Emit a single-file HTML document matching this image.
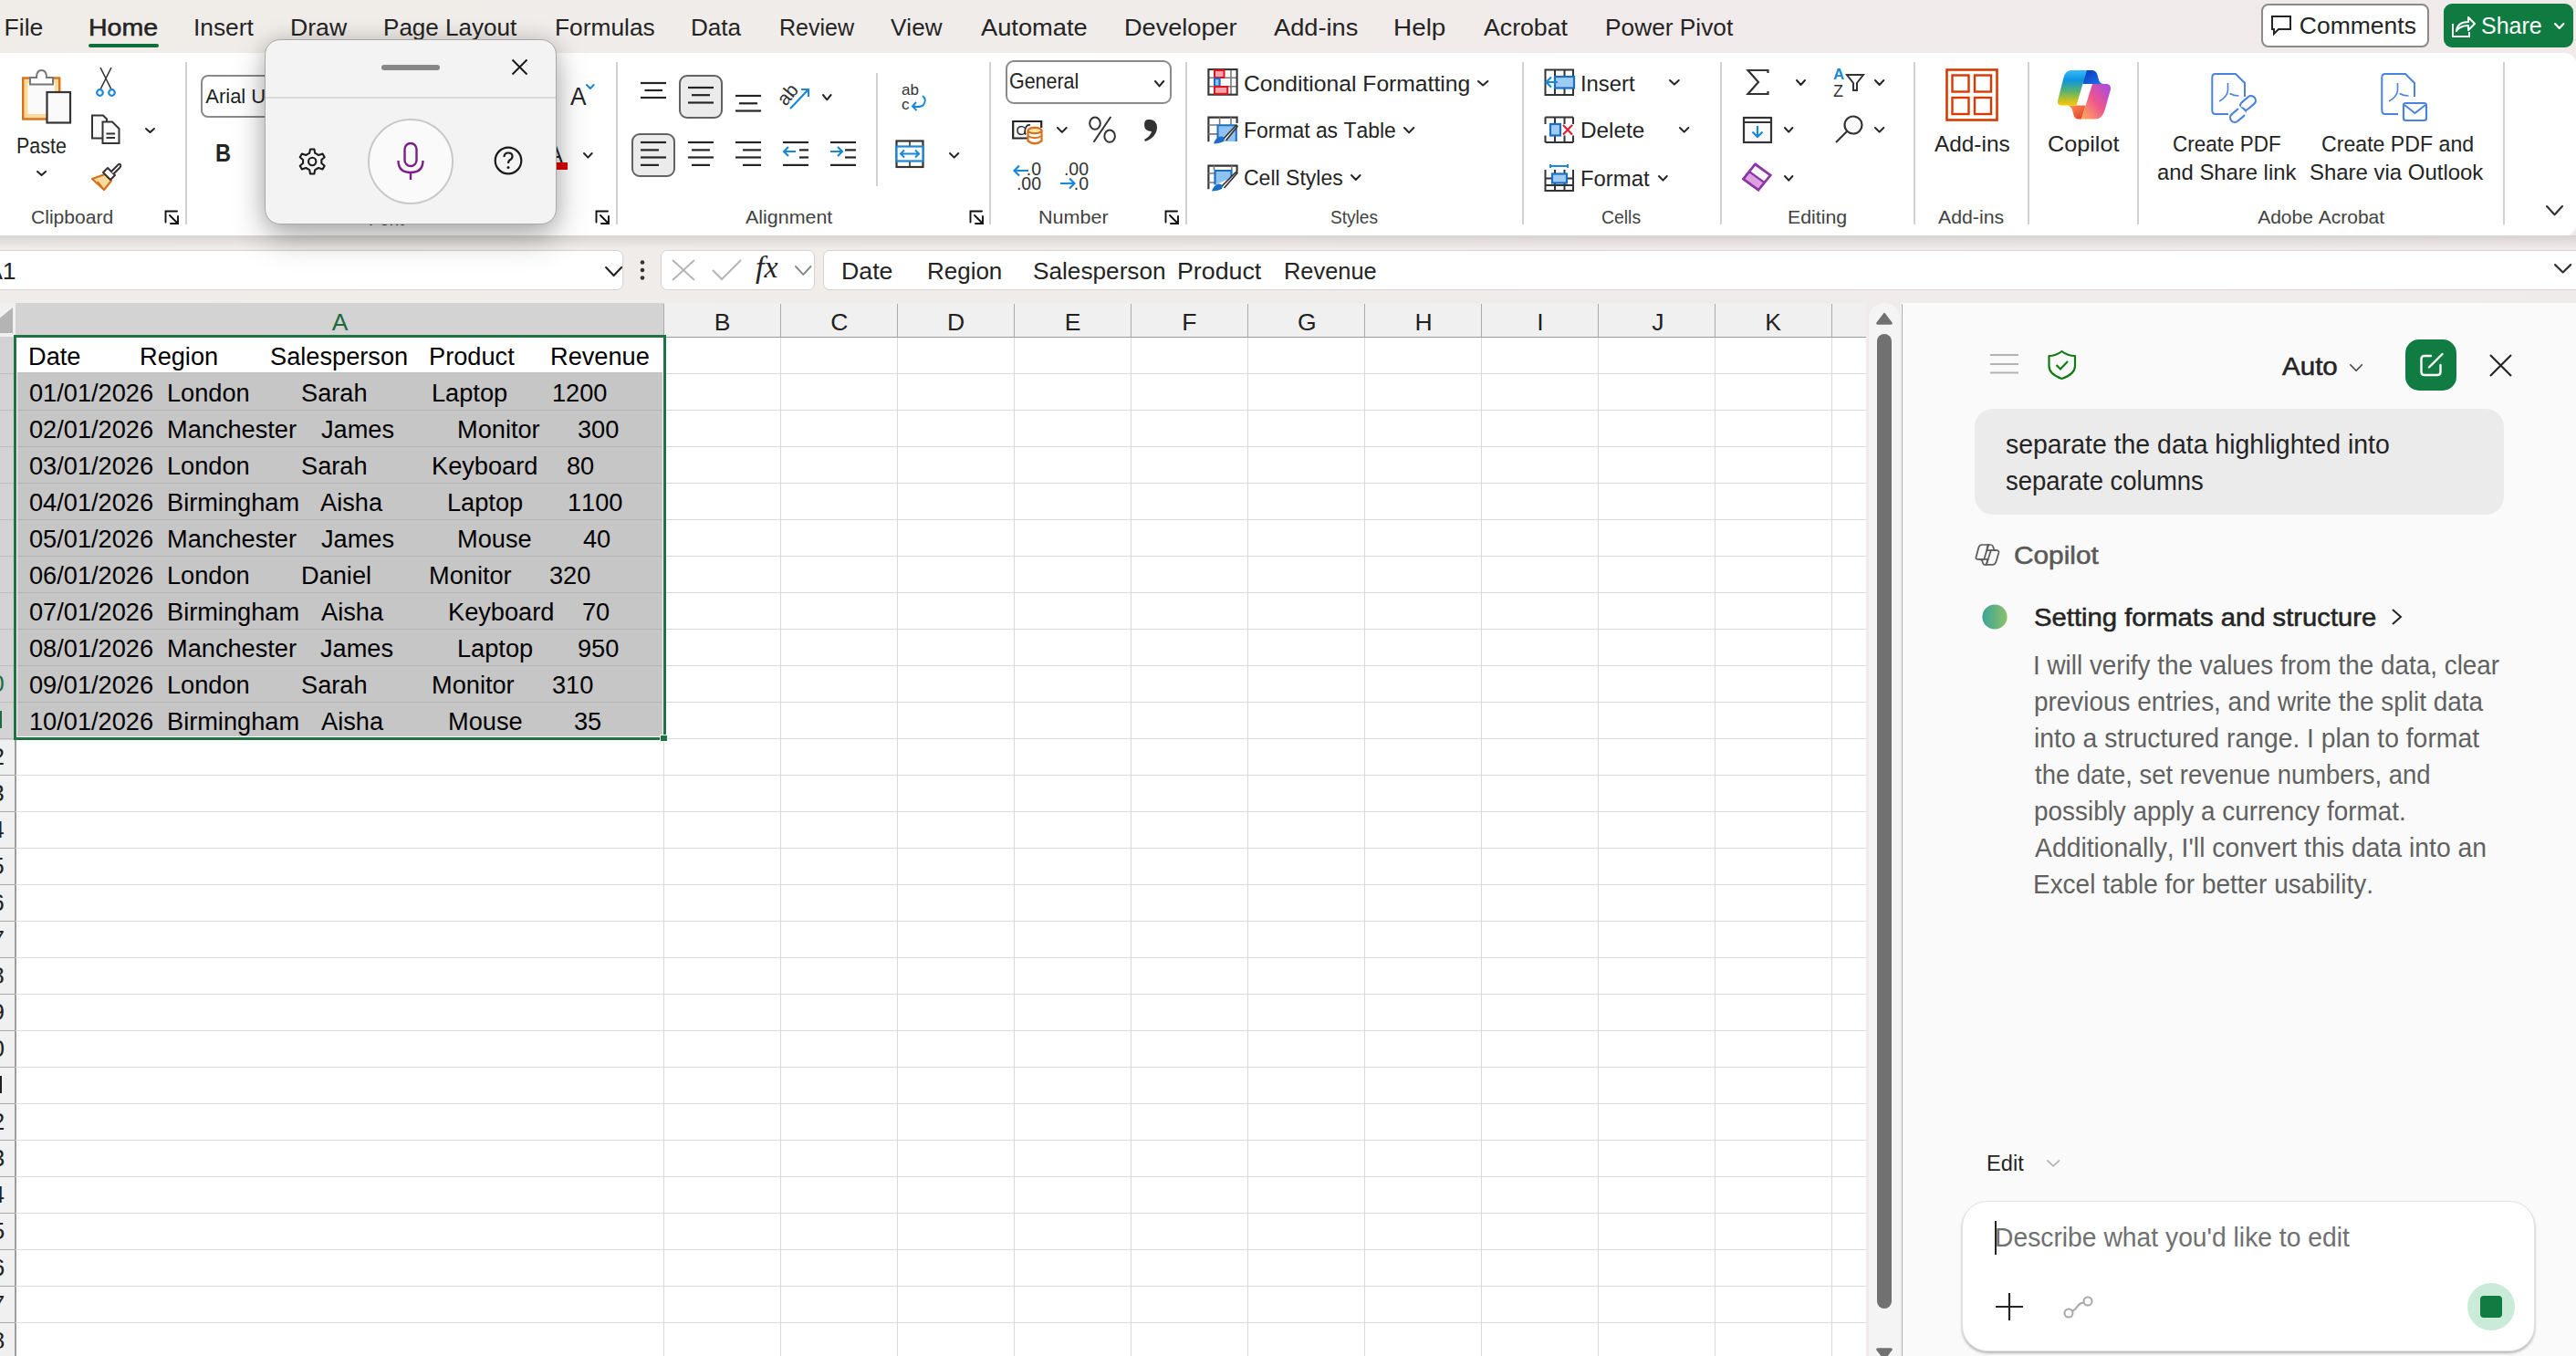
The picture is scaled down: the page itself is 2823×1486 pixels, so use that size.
<!DOCTYPE html>
<html><head><meta charset="utf-8"><style>
html,body{margin:0;padding:0;}
body{width:2823px;height:1486px;overflow:hidden;position:relative;background:#EFEBE8;font-family:"Liberation Sans",sans-serif;font-kerning:none;}
.t{position:absolute;white-space:pre;transform-origin:0 0;font-kerning:none;}
.b{position:absolute;box-sizing:border-box;}
.i{position:absolute;overflow:visible;}
</style></head><body>
<div class="b" style="left:0px;top:0px;width:2823px;height:332px;background:linear-gradient(90deg,#F0EDE9 0%,#F0ECEA 45%,#F1EAEB 100%);"></div>
<div class="b" style="left:-20px;top:58px;width:2843px;height:200px;background:#FFFFFF;border-radius:0 12px 12px 0;"></div>
<div class="b" style="left:0px;top:258px;width:2823px;height:14px;background:linear-gradient(180deg,rgba(0,0,0,0.10),rgba(0,0,0,0));"></div>
<div class="b" style="left:-40px;top:332px;width:2085px;height:1154px;background:#FFFFFF;"></div>
<div class="b" style="left:17px;top:332px;width:2028px;height:37px;background:#F0F0F0;"></div>
<div class="b" style="left:17px;top:332px;width:711px;height:37px;background:#D3D3D3;"></div>
<div class="b" style="left:-40px;top:369px;width:57px;height:1117px;background:#F0F0F0;"></div>
<div class="b" style="left:-40px;top:369px;width:57px;height:442px;background:#D3D3D3;"></div>
<div class="b" style="left:0px;top:332px;width:17px;height:37px;background:#F0F0F0;"></div>
<div class="b" style="left:15px;top:369px;width:2030px;height:1px;background:#9A9A9A;"></div>
<div class="b" style="left:16px;top:369px;width:2px;height:1117px;background:#9D9D9D;"></div>
<div class="b" style="left:727px;top:333px;width:1px;height:36px;background:#ABABAB;"></div>
<div class="b" style="left:855px;top:333px;width:1px;height:36px;background:#ABABAB;"></div>
<div class="b" style="left:983px;top:333px;width:1px;height:36px;background:#ABABAB;"></div>
<div class="b" style="left:1111px;top:333px;width:1px;height:36px;background:#ABABAB;"></div>
<div class="b" style="left:1239px;top:333px;width:1px;height:36px;background:#ABABAB;"></div>
<div class="b" style="left:1367px;top:333px;width:1px;height:36px;background:#ABABAB;"></div>
<div class="b" style="left:1495px;top:333px;width:1px;height:36px;background:#ABABAB;"></div>
<div class="b" style="left:1623px;top:333px;width:1px;height:36px;background:#ABABAB;"></div>
<div class="b" style="left:1751px;top:333px;width:1px;height:36px;background:#ABABAB;"></div>
<div class="b" style="left:1879px;top:333px;width:1px;height:36px;background:#ABABAB;"></div>
<div class="b" style="left:2007px;top:333px;width:1px;height:36px;background:#ABABAB;"></div>
<div class="b" style="left:727px;top:370px;width:1px;height:1117px;background:#D9D9D9;"></div>
<div class="b" style="left:855px;top:370px;width:1px;height:1117px;background:#D9D9D9;"></div>
<div class="b" style="left:983px;top:370px;width:1px;height:1117px;background:#D9D9D9;"></div>
<div class="b" style="left:1111px;top:370px;width:1px;height:1117px;background:#D9D9D9;"></div>
<div class="b" style="left:1239px;top:370px;width:1px;height:1117px;background:#D9D9D9;"></div>
<div class="b" style="left:1367px;top:370px;width:1px;height:1117px;background:#D9D9D9;"></div>
<div class="b" style="left:1495px;top:370px;width:1px;height:1117px;background:#D9D9D9;"></div>
<div class="b" style="left:1623px;top:370px;width:1px;height:1117px;background:#D9D9D9;"></div>
<div class="b" style="left:1751px;top:370px;width:1px;height:1117px;background:#D9D9D9;"></div>
<div class="b" style="left:1879px;top:370px;width:1px;height:1117px;background:#D9D9D9;"></div>
<div class="b" style="left:2007px;top:370px;width:1px;height:1117px;background:#D9D9D9;"></div>
<div class="b" style="left:17px;top:409px;width:2028px;height:1px;background:#DADADA;"></div>
<div class="b" style="left:-40px;top:409px;width:57px;height:1px;background:#BDBDBD;"></div>
<div class="b" style="left:17px;top:449px;width:2028px;height:1px;background:#DADADA;"></div>
<div class="b" style="left:-40px;top:449px;width:57px;height:1px;background:#BDBDBD;"></div>
<div class="b" style="left:17px;top:489px;width:2028px;height:1px;background:#DADADA;"></div>
<div class="b" style="left:-40px;top:489px;width:57px;height:1px;background:#BDBDBD;"></div>
<div class="b" style="left:17px;top:529px;width:2028px;height:1px;background:#DADADA;"></div>
<div class="b" style="left:-40px;top:529px;width:57px;height:1px;background:#BDBDBD;"></div>
<div class="b" style="left:17px;top:569px;width:2028px;height:1px;background:#DADADA;"></div>
<div class="b" style="left:-40px;top:569px;width:57px;height:1px;background:#BDBDBD;"></div>
<div class="b" style="left:17px;top:609px;width:2028px;height:1px;background:#DADADA;"></div>
<div class="b" style="left:-40px;top:609px;width:57px;height:1px;background:#BDBDBD;"></div>
<div class="b" style="left:17px;top:649px;width:2028px;height:1px;background:#DADADA;"></div>
<div class="b" style="left:-40px;top:649px;width:57px;height:1px;background:#BDBDBD;"></div>
<div class="b" style="left:17px;top:689px;width:2028px;height:1px;background:#DADADA;"></div>
<div class="b" style="left:-40px;top:689px;width:57px;height:1px;background:#BDBDBD;"></div>
<div class="b" style="left:17px;top:729px;width:2028px;height:1px;background:#DADADA;"></div>
<div class="b" style="left:-40px;top:729px;width:57px;height:1px;background:#BDBDBD;"></div>
<div class="b" style="left:17px;top:769px;width:2028px;height:1px;background:#DADADA;"></div>
<div class="b" style="left:-40px;top:769px;width:57px;height:1px;background:#BDBDBD;"></div>
<div class="b" style="left:17px;top:809px;width:2028px;height:1px;background:#DADADA;"></div>
<div class="b" style="left:-40px;top:809px;width:57px;height:1px;background:#BDBDBD;"></div>
<div class="b" style="left:17px;top:849px;width:2028px;height:1px;background:#DADADA;"></div>
<div class="b" style="left:-40px;top:849px;width:57px;height:1px;background:#A8A8A8;"></div>
<div class="b" style="left:17px;top:889px;width:2028px;height:1px;background:#DADADA;"></div>
<div class="b" style="left:-40px;top:889px;width:57px;height:1px;background:#A8A8A8;"></div>
<div class="b" style="left:17px;top:929px;width:2028px;height:1px;background:#DADADA;"></div>
<div class="b" style="left:-40px;top:929px;width:57px;height:1px;background:#A8A8A8;"></div>
<div class="b" style="left:17px;top:969px;width:2028px;height:1px;background:#DADADA;"></div>
<div class="b" style="left:-40px;top:969px;width:57px;height:1px;background:#A8A8A8;"></div>
<div class="b" style="left:17px;top:1009px;width:2028px;height:1px;background:#DADADA;"></div>
<div class="b" style="left:-40px;top:1009px;width:57px;height:1px;background:#A8A8A8;"></div>
<div class="b" style="left:17px;top:1049px;width:2028px;height:1px;background:#DADADA;"></div>
<div class="b" style="left:-40px;top:1049px;width:57px;height:1px;background:#A8A8A8;"></div>
<div class="b" style="left:17px;top:1089px;width:2028px;height:1px;background:#DADADA;"></div>
<div class="b" style="left:-40px;top:1089px;width:57px;height:1px;background:#A8A8A8;"></div>
<div class="b" style="left:17px;top:1129px;width:2028px;height:1px;background:#DADADA;"></div>
<div class="b" style="left:-40px;top:1129px;width:57px;height:1px;background:#A8A8A8;"></div>
<div class="b" style="left:17px;top:1169px;width:2028px;height:1px;background:#DADADA;"></div>
<div class="b" style="left:-40px;top:1169px;width:57px;height:1px;background:#A8A8A8;"></div>
<div class="b" style="left:17px;top:1209px;width:2028px;height:1px;background:#DADADA;"></div>
<div class="b" style="left:-40px;top:1209px;width:57px;height:1px;background:#A8A8A8;"></div>
<div class="b" style="left:17px;top:1249px;width:2028px;height:1px;background:#DADADA;"></div>
<div class="b" style="left:-40px;top:1249px;width:57px;height:1px;background:#A8A8A8;"></div>
<div class="b" style="left:17px;top:1289px;width:2028px;height:1px;background:#DADADA;"></div>
<div class="b" style="left:-40px;top:1289px;width:57px;height:1px;background:#A8A8A8;"></div>
<div class="b" style="left:17px;top:1329px;width:2028px;height:1px;background:#DADADA;"></div>
<div class="b" style="left:-40px;top:1329px;width:57px;height:1px;background:#A8A8A8;"></div>
<div class="b" style="left:17px;top:1369px;width:2028px;height:1px;background:#DADADA;"></div>
<div class="b" style="left:-40px;top:1369px;width:57px;height:1px;background:#A8A8A8;"></div>
<div class="b" style="left:17px;top:1409px;width:2028px;height:1px;background:#DADADA;"></div>
<div class="b" style="left:-40px;top:1409px;width:57px;height:1px;background:#A8A8A8;"></div>
<div class="b" style="left:17px;top:1449px;width:2028px;height:1px;background:#DADADA;"></div>
<div class="b" style="left:-40px;top:1449px;width:57px;height:1px;background:#A8A8A8;"></div>
<div class="b" style="left:17px;top:1489px;width:2028px;height:1px;background:#DADADA;"></div>
<div class="b" style="left:-40px;top:1489px;width:57px;height:1px;background:#A8A8A8;"></div>
<div class="b" style="left:19px;top:409px;width:707px;height:400px;background:#C6C6C6;"></div>
<div class="b" style="left:19px;top:449px;width:707px;height:1px;background:#B3B3B3;"></div>
<div class="b" style="left:19px;top:489px;width:707px;height:1px;background:#B3B3B3;"></div>
<div class="b" style="left:19px;top:529px;width:707px;height:1px;background:#B3B3B3;"></div>
<div class="b" style="left:19px;top:569px;width:707px;height:1px;background:#B3B3B3;"></div>
<div class="b" style="left:19px;top:609px;width:707px;height:1px;background:#B3B3B3;"></div>
<div class="b" style="left:19px;top:649px;width:707px;height:1px;background:#B3B3B3;"></div>
<div class="b" style="left:19px;top:689px;width:707px;height:1px;background:#B3B3B3;"></div>
<div class="b" style="left:19px;top:729px;width:707px;height:1px;background:#B3B3B3;"></div>
<div class="b" style="left:19px;top:769px;width:707px;height:1px;background:#B3B3B3;"></div>
<div class="b" style="left:19px;top:370px;width:707px;height:38px;background:#FFFFFF;"></div>
<div class="b" style="left:19px;top:408px;width:707px;height:1px;background:#C0C0C0;"></div>
<div class="b" style="left:15px;top:367px;width:715px;height:444px;border:3px solid #1F7244;"></div>
<div class="b" style="left:18px;top:370px;width:709px;height:438px;border:1px solid #FFFFFF;border-top:none;border-left:1px solid #FFFFFF;"></div>
<div class="b" style="left:723px;top:805px;width:9px;height:8px;background:#1F7244;border:1px solid #fff;"></div>
<div class="b" style="left:2045px;top:332px;width:39px;height:1154px;background:#F1EAEB;"></div>
<div class="b" style="left:2048px;top:332px;width:34px;height:1170px;background:#F4F4F4;border-radius:17px;"></div>
<div class="b" style="left:2057px;top:366px;width:16px;height:1068px;background:#717171;border-radius:8px;"></div>
<svg class="i" style="left:2056px;top:342px;" width="18" height="14" viewBox="0 0 18 14"><path d="M9 1.5 L17 12 Q17.5 13 16 13 L2 13 Q0.5 13 1 12 Z" fill="#717171" stroke="#717171" stroke-width="1.5" stroke-linejoin="round"/></svg>
<svg class="i" style="left:2056px;top:1477px;" width="18" height="14" viewBox="0 0 18 14"><path d="M9 12.5 L17 2 Q17.5 1 16 1 L2 1 Q0.5 1 1 2 Z" fill="#717171" stroke="#717171" stroke-width="1.5" stroke-linejoin="round"/></svg>
<div class="b" style="left:2083px;top:332px;width:740px;height:1154px;background:#FAFAFA;"></div>
<div class="b" style="left:2084px;top:333px;width:1px;height:1153px;background:#A9A9A9;"></div>
<span class="t" style="left:4.62px;top:16.56px;font-size:26.5px;line-height:26.5px;color:#242424;font-weight:400;">File</span>
<span class="t" style="left:96.86px;top:16.56px;font-size:26.5px;line-height:26.5px;color:#242424;font-weight:400;transform:scaleX(1.0767);-webkit-text-stroke:0.55px #242424;">Home</span>
<span class="t" style="left:211.57px;top:16.56px;font-size:26.5px;line-height:26.5px;color:#242424;font-weight:400;transform:scaleX(0.9931);">Insert</span>
<span class="t" style="left:317.82px;top:16.56px;font-size:26.5px;line-height:26.5px;color:#242424;font-weight:400;transform:scaleX(1.0045);">Draw</span>
<span class="t" style="left:420.46px;top:16.56px;font-size:26.5px;line-height:26.5px;color:#242424;font-weight:400;transform:scaleX(0.9833);">Page Layout</span>
<span class="t" style="left:607.94px;top:16.56px;font-size:26.5px;line-height:26.5px;color:#242424;font-weight:400;transform:scaleX(0.9934);">Formulas</span>
<span class="t" style="left:757.16px;top:16.56px;font-size:26.5px;line-height:26.5px;color:#242424;font-weight:400;transform:scaleX(0.9851);">Data</span>
<span class="t" style="left:853.55px;top:16.56px;font-size:26.5px;line-height:26.5px;color:#242424;font-weight:400;transform:scaleX(0.9448);">Review</span>
<span class="t" style="left:976.49px;top:16.56px;font-size:26.5px;line-height:26.5px;color:#242424;font-weight:400;transform:scaleX(0.9828);">View</span>
<span class="t" style="left:1074.55px;top:16.56px;font-size:26.5px;line-height:26.5px;color:#242424;font-weight:400;transform:scaleX(1.0294);">Automate</span>
<span class="t" style="left:1231.78px;top:16.56px;font-size:26.5px;line-height:26.5px;color:#242424;font-weight:400;transform:scaleX(1.0231);">Developer</span>
<span class="t" style="left:1396.15px;top:16.56px;font-size:26.5px;line-height:26.5px;color:#242424;font-weight:400;transform:scaleX(1.0277);">Add-ins</span>
<span class="t" style="left:1527.01px;top:16.56px;font-size:26.5px;line-height:26.5px;color:#242424;font-weight:400;transform:scaleX(1.0524);">Help</span>
<span class="t" style="left:1625.95px;top:16.56px;font-size:26.5px;line-height:26.5px;color:#242424;font-weight:400;transform:scaleX(1.0068);">Acrobat</span>
<span class="t" style="left:1758.94px;top:16.56px;font-size:26.5px;line-height:26.5px;color:#242424;font-weight:400;transform:scaleX(0.9919);">Power Pivot</span>
<div class="b" style="left:97px;top:48px;width:77px;height:4px;background:#0F6F3A;border-radius:2px;"></div>
<span class="t" style="left:31.37px;top:376.12px;font-size:28.2px;line-height:28.2px;color:#000000;font-weight:400;transform:scaleX(0.9645);">Date</span>
<span class="t" style="left:153.37px;top:376.12px;font-size:28.2px;line-height:28.2px;color:#000000;font-weight:400;transform:scaleX(0.9645);">Region</span>
<span class="t" style="left:296.36px;top:376.12px;font-size:28.2px;line-height:28.2px;color:#000000;font-weight:400;transform:scaleX(0.9645);">Salesperson</span>
<span class="t" style="left:469.87px;top:376.12px;font-size:28.2px;line-height:28.2px;color:#000000;font-weight:400;transform:scaleX(0.9645);">Product</span>
<span class="t" style="left:603.07px;top:376.12px;font-size:28.2px;line-height:28.2px;color:#000000;font-weight:400;transform:scaleX(0.9645);">Revenue</span>
<span class="t" style="left:31.50px;top:416.12px;font-size:28.2px;line-height:28.2px;color:#000000;font-weight:400;transform:scaleX(0.9645);">01/01/2026</span>
<span class="t" style="left:183.07px;top:416.12px;font-size:28.2px;line-height:28.2px;color:#000000;font-weight:400;transform:scaleX(0.9645);">London</span>
<span class="t" style="left:329.96px;top:416.12px;font-size:28.2px;line-height:28.2px;color:#000000;font-weight:400;transform:scaleX(0.9645);">Sarah</span>
<span class="t" style="left:472.77px;top:416.12px;font-size:28.2px;line-height:28.2px;color:#000000;font-weight:400;transform:scaleX(0.9645);">Laptop</span>
<span class="t" style="left:605.23px;top:416.12px;font-size:28.2px;line-height:28.2px;color:#000000;font-weight:400;transform:scaleX(0.9645);">1200</span>
<span class="t" style="left:31.50px;top:456.12px;font-size:28.2px;line-height:28.2px;color:#000000;font-weight:400;transform:scaleX(0.9645);">02/01/2026</span>
<span class="t" style="left:183.07px;top:456.12px;font-size:28.2px;line-height:28.2px;color:#000000;font-weight:400;transform:scaleX(0.9645);">Manchester</span>
<span class="t" style="left:351.88px;top:456.12px;font-size:28.2px;line-height:28.2px;color:#000000;font-weight:400;transform:scaleX(0.9645);">James</span>
<span class="t" style="left:501.47px;top:456.12px;font-size:28.2px;line-height:28.2px;color:#000000;font-weight:400;transform:scaleX(0.9645);">Monitor</span>
<span class="t" style="left:633.06px;top:456.12px;font-size:28.2px;line-height:28.2px;color:#000000;font-weight:400;transform:scaleX(0.9645);">300</span>
<span class="t" style="left:31.50px;top:496.12px;font-size:28.2px;line-height:28.2px;color:#000000;font-weight:400;transform:scaleX(0.9645);">03/01/2026</span>
<span class="t" style="left:183.07px;top:496.12px;font-size:28.2px;line-height:28.2px;color:#000000;font-weight:400;transform:scaleX(0.9645);">London</span>
<span class="t" style="left:330.06px;top:496.12px;font-size:28.2px;line-height:28.2px;color:#000000;font-weight:400;transform:scaleX(0.9645);">Sarah</span>
<span class="t" style="left:472.77px;top:496.12px;font-size:28.2px;line-height:28.2px;color:#000000;font-weight:400;transform:scaleX(0.9645);">Keyboard</span>
<span class="t" style="left:621.42px;top:496.12px;font-size:28.2px;line-height:28.2px;color:#000000;font-weight:400;transform:scaleX(0.9645);">80</span>
<span class="t" style="left:31.50px;top:536.12px;font-size:28.2px;line-height:28.2px;color:#000000;font-weight:400;transform:scaleX(0.9645);">04/01/2026</span>
<span class="t" style="left:183.07px;top:536.12px;font-size:28.2px;line-height:28.2px;color:#000000;font-weight:400;transform:scaleX(0.9645);">Birmingham</span>
<span class="t" style="left:351.25px;top:536.12px;font-size:28.2px;line-height:28.2px;color:#000000;font-weight:400;transform:scaleX(0.9645);">Aisha</span>
<span class="t" style="left:490.07px;top:536.12px;font-size:28.2px;line-height:28.2px;color:#000000;font-weight:400;transform:scaleX(0.9645);">Laptop</span>
<span class="t" style="left:622.43px;top:536.12px;font-size:28.2px;line-height:28.2px;color:#000000;font-weight:400;transform:scaleX(0.9645);">1100</span>
<span class="t" style="left:31.50px;top:576.12px;font-size:28.2px;line-height:28.2px;color:#000000;font-weight:400;transform:scaleX(0.9645);">05/01/2026</span>
<span class="t" style="left:183.07px;top:576.12px;font-size:28.2px;line-height:28.2px;color:#000000;font-weight:400;transform:scaleX(0.9645);">Manchester</span>
<span class="t" style="left:351.88px;top:576.12px;font-size:28.2px;line-height:28.2px;color:#000000;font-weight:400;transform:scaleX(0.9645);">James</span>
<span class="t" style="left:501.47px;top:576.12px;font-size:28.2px;line-height:28.2px;color:#000000;font-weight:400;transform:scaleX(0.9645);">Mouse</span>
<span class="t" style="left:639.28px;top:576.12px;font-size:28.2px;line-height:28.2px;color:#000000;font-weight:400;transform:scaleX(0.9645);">40</span>
<span class="t" style="left:31.50px;top:616.12px;font-size:28.2px;line-height:28.2px;color:#000000;font-weight:400;transform:scaleX(0.9645);">06/01/2026</span>
<span class="t" style="left:183.07px;top:616.12px;font-size:28.2px;line-height:28.2px;color:#000000;font-weight:400;transform:scaleX(0.9645);">London</span>
<span class="t" style="left:329.97px;top:616.12px;font-size:28.2px;line-height:28.2px;color:#000000;font-weight:400;transform:scaleX(0.9645);">Daniel</span>
<span class="t" style="left:470.07px;top:616.12px;font-size:28.2px;line-height:28.2px;color:#000000;font-weight:400;transform:scaleX(0.9645);">Monitor</span>
<span class="t" style="left:601.66px;top:616.12px;font-size:28.2px;line-height:28.2px;color:#000000;font-weight:400;transform:scaleX(0.9645);">320</span>
<span class="t" style="left:31.50px;top:656.12px;font-size:28.2px;line-height:28.2px;color:#000000;font-weight:400;transform:scaleX(0.9645);">07/01/2026</span>
<span class="t" style="left:183.07px;top:656.12px;font-size:28.2px;line-height:28.2px;color:#000000;font-weight:400;transform:scaleX(0.9645);">Birmingham</span>
<span class="t" style="left:351.75px;top:656.12px;font-size:28.2px;line-height:28.2px;color:#000000;font-weight:400;transform:scaleX(0.9645);">Aisha</span>
<span class="t" style="left:490.67px;top:656.12px;font-size:28.2px;line-height:28.2px;color:#000000;font-weight:400;transform:scaleX(0.9645);">Keyboard</span>
<span class="t" style="left:637.91px;top:656.12px;font-size:28.2px;line-height:28.2px;color:#000000;font-weight:400;transform:scaleX(0.9645);">70</span>
<span class="t" style="left:31.50px;top:696.12px;font-size:28.2px;line-height:28.2px;color:#000000;font-weight:400;transform:scaleX(0.9645);">08/01/2026</span>
<span class="t" style="left:183.07px;top:696.12px;font-size:28.2px;line-height:28.2px;color:#000000;font-weight:400;transform:scaleX(0.9645);">Manchester</span>
<span class="t" style="left:351.38px;top:696.12px;font-size:28.2px;line-height:28.2px;color:#000000;font-weight:400;transform:scaleX(0.9645);">James</span>
<span class="t" style="left:501.37px;top:696.12px;font-size:28.2px;line-height:28.2px;color:#000000;font-weight:400;transform:scaleX(0.9645);">Laptop</span>
<span class="t" style="left:632.73px;top:696.12px;font-size:28.2px;line-height:28.2px;color:#000000;font-weight:400;transform:scaleX(0.9645);">950</span>
<span class="t" style="left:31.50px;top:736.12px;font-size:28.2px;line-height:28.2px;color:#000000;font-weight:400;transform:scaleX(0.9645);">09/01/2026</span>
<span class="t" style="left:183.07px;top:736.12px;font-size:28.2px;line-height:28.2px;color:#000000;font-weight:400;transform:scaleX(0.9645);">London</span>
<span class="t" style="left:330.06px;top:736.12px;font-size:28.2px;line-height:28.2px;color:#000000;font-weight:400;transform:scaleX(0.9645);">Sarah</span>
<span class="t" style="left:473.37px;top:736.12px;font-size:28.2px;line-height:28.2px;color:#000000;font-weight:400;transform:scaleX(0.9645);">Monitor</span>
<span class="t" style="left:604.86px;top:736.12px;font-size:28.2px;line-height:28.2px;color:#000000;font-weight:400;transform:scaleX(0.9645);">310</span>
<span class="t" style="left:31.50px;top:776.12px;font-size:28.2px;line-height:28.2px;color:#000000;font-weight:400;transform:scaleX(0.9645);">10/01/2026</span>
<span class="t" style="left:183.07px;top:776.12px;font-size:28.2px;line-height:28.2px;color:#000000;font-weight:400;transform:scaleX(0.9645);">Birmingham</span>
<span class="t" style="left:351.75px;top:776.12px;font-size:28.2px;line-height:28.2px;color:#000000;font-weight:400;transform:scaleX(0.9645);">Aisha</span>
<span class="t" style="left:490.67px;top:776.12px;font-size:28.2px;line-height:28.2px;color:#000000;font-weight:400;transform:scaleX(0.9645);">Mouse</span>
<span class="t" style="left:629.26px;top:776.12px;font-size:28.2px;line-height:28.2px;color:#000000;font-weight:400;transform:scaleX(0.9645);">35</span>
<span class="t" style="left:363.66px;top:339.56px;font-size:26.5px;line-height:26.5px;color:#1D6B41;font-weight:400;">A</span>
<span class="t" style="left:782.77px;top:339.56px;font-size:26.5px;line-height:26.5px;color:#212121;font-weight:400;">B</span>
<span class="t" style="left:910.26px;top:339.56px;font-size:26.5px;line-height:26.5px;color:#212121;font-weight:400;">C</span>
<span class="t" style="left:1037.98px;top:339.56px;font-size:26.5px;line-height:26.5px;color:#212121;font-weight:400;">D</span>
<span class="t" style="left:1166.64px;top:339.56px;font-size:26.5px;line-height:26.5px;color:#212121;font-weight:400;">E</span>
<span class="t" style="left:1295.35px;top:339.56px;font-size:26.5px;line-height:26.5px;color:#212121;font-weight:400;">F</span>
<span class="t" style="left:1422.02px;top:339.56px;font-size:26.5px;line-height:26.5px;color:#212121;font-weight:400;">G</span>
<span class="t" style="left:1550.42px;top:339.56px;font-size:26.5px;line-height:26.5px;color:#212121;font-weight:400;">H</span>
<span class="t" style="left:1684.32px;top:339.56px;font-size:26.5px;line-height:26.5px;color:#212121;font-weight:400;">I</span>
<span class="t" style="left:1810.15px;top:339.56px;font-size:26.5px;line-height:26.5px;color:#212121;font-weight:400;">J</span>
<span class="t" style="left:1934.22px;top:339.56px;font-size:26.5px;line-height:26.5px;color:#212121;font-weight:400;">K</span>
<span class="t" style="left:-24.73px;top:735.56px;font-size:26.5px;line-height:26.5px;color:#1D6B41;font-weight:400;">10</span>
<div class="b" style="left:0px;top:779px;width:2.4px;height:19px;background:#1D6B41;"></div>
<span class="t" style="left:-24.58px;top:815.56px;font-size:26.5px;line-height:26.5px;color:#212121;font-weight:400;">12</span>
<span class="t" style="left:-24.67px;top:855.56px;font-size:26.5px;line-height:26.5px;color:#212121;font-weight:400;">13</span>
<span class="t" style="left:-24.86px;top:895.56px;font-size:26.5px;line-height:26.5px;color:#212121;font-weight:400;">14</span>
<span class="t" style="left:-24.69px;top:935.56px;font-size:26.5px;line-height:26.5px;color:#212121;font-weight:400;">15</span>
<span class="t" style="left:-24.67px;top:975.56px;font-size:26.5px;line-height:26.5px;color:#212121;font-weight:400;">16</span>
<span class="t" style="left:-24.58px;top:1015.56px;font-size:26.5px;line-height:26.5px;color:#212121;font-weight:400;">17</span>
<span class="t" style="left:-24.67px;top:1055.56px;font-size:26.5px;line-height:26.5px;color:#212121;font-weight:400;">18</span>
<span class="t" style="left:-24.62px;top:1095.56px;font-size:26.5px;line-height:26.5px;color:#212121;font-weight:400;">19</span>
<span class="t" style="left:-24.39px;top:1135.56px;font-size:26.5px;line-height:26.5px;color:#212121;font-weight:400;">20</span>
<div class="b" style="left:0px;top:1179px;width:2.4px;height:19px;background:#212121;"></div>
<span class="t" style="left:-24.24px;top:1215.56px;font-size:26.5px;line-height:26.5px;color:#212121;font-weight:400;">22</span>
<span class="t" style="left:-24.32px;top:1255.56px;font-size:26.5px;line-height:26.5px;color:#212121;font-weight:400;">23</span>
<span class="t" style="left:-24.52px;top:1295.56px;font-size:26.5px;line-height:26.5px;color:#212121;font-weight:400;">24</span>
<span class="t" style="left:-24.35px;top:1335.56px;font-size:26.5px;line-height:26.5px;color:#212121;font-weight:400;">25</span>
<span class="t" style="left:-24.32px;top:1375.56px;font-size:26.5px;line-height:26.5px;color:#212121;font-weight:400;">26</span>
<span class="t" style="left:-24.24px;top:1415.56px;font-size:26.5px;line-height:26.5px;color:#212121;font-weight:400;">27</span>
<span class="t" style="left:-24.33px;top:1455.56px;font-size:26.5px;line-height:26.5px;color:#212121;font-weight:400;">28</span>
<span class="t" style="left:34.43px;top:226.72px;font-size:21px;line-height:21px;color:#424242;font-weight:400;transform:scaleX(1.0027);">Clipboard</span>
<span class="t" style="left:816.66px;top:226.72px;font-size:21px;line-height:21px;color:#424242;font-weight:400;transform:scaleX(1.0205);">Alignment</span>
<span class="t" style="left:1137.63px;top:226.72px;font-size:21px;line-height:21px;color:#424242;font-weight:400;transform:scaleX(1.0273);">Number</span>
<span class="t" style="left:1457.63px;top:226.72px;font-size:21px;line-height:21px;color:#424242;font-weight:400;transform:scaleX(0.9103);">Styles</span>
<span class="t" style="left:1754.72px;top:226.72px;font-size:21px;line-height:21px;color:#424242;font-weight:400;transform:scaleX(0.9231);">Cells</span>
<span class="t" style="left:1958.75px;top:226.72px;font-size:21px;line-height:21px;color:#424242;font-weight:400;transform:scaleX(1.0142);">Editing</span>
<span class="t" style="left:2123.96px;top:226.72px;font-size:21px;line-height:21px;color:#424242;font-weight:400;transform:scaleX(1.0127);">Add-ins</span>
<span class="t" style="left:2474.16px;top:226.72px;font-size:21px;line-height:21px;color:#424242;font-weight:400;">Adobe Acrobat</span>
<span class="t" style="left:17.94px;top:147.76px;font-size:24.5px;line-height:24.5px;color:#242424;font-weight:400;transform:scaleX(0.8749);">Paste</span>
<span class="t" style="left:1363.35px;top:79.76px;font-size:24.5px;line-height:24.5px;color:#242424;font-weight:400;transform:scaleX(1.0071);">Conditional Formatting</span>
<span class="t" style="left:1362.72px;top:131.06px;font-size:24.5px;line-height:24.5px;color:#242424;font-weight:400;transform:scaleX(0.9346);">Format as Table</span>
<span class="t" style="left:1363.43px;top:183.06px;font-size:24.5px;line-height:24.5px;color:#242424;font-weight:400;transform:scaleX(0.9393);">Cell Styles</span>
<span class="t" style="left:1732.00px;top:80.06px;font-size:24.5px;line-height:24.5px;color:#242424;font-weight:400;transform:scaleX(0.9722);">Insert</span>
<span class="t" style="left:1732.20px;top:131.46px;font-size:24.5px;line-height:24.5px;color:#242424;font-weight:400;transform:scaleX(0.9938);">Delete</span>
<span class="t" style="left:1732.24px;top:183.86px;font-size:24.5px;line-height:24.5px;color:#242424;font-weight:400;transform:scaleX(0.9734);">Format</span>
<span class="t" style="left:2119.85px;top:146.06px;font-size:24.5px;line-height:24.5px;color:#242424;font-weight:400;transform:scaleX(0.9947);">Add-ins</span>
<span class="t" style="left:2243.72px;top:146.06px;font-size:24.5px;line-height:24.5px;color:#242424;font-weight:400;transform:scaleX(1.0289);">Copilot</span>
<span class="t" style="left:2381.36px;top:146.06px;font-size:24.5px;line-height:24.5px;color:#242424;font-weight:400;transform:scaleX(0.9180);">Create PDF</span>
<span class="t" style="left:2364.49px;top:177.36px;font-size:24.5px;line-height:24.5px;color:#242424;font-weight:400;transform:scaleX(0.9728);">and Share link</span>
<span class="t" style="left:2544.13px;top:146.06px;font-size:24.5px;line-height:24.5px;color:#242424;font-weight:400;transform:scaleX(0.9443);">Create PDF and</span>
<span class="t" style="left:2531.41px;top:177.36px;font-size:24.5px;line-height:24.5px;color:#242424;font-weight:400;transform:scaleX(0.9774);">Share via Outlook</span>
<div class="b" style="left:2478px;top:4px;width:184px;height:48px;background:#FFFFFF;border:2px solid #8A8A8A;border-radius:8px;"></div>
<span class="t" style="left:2519.85px;top:15.36px;font-size:26.5px;line-height:26.5px;color:#242424;font-weight:400;">Comments</span>
<div class="b" style="left:2678px;top:4px;width:142px;height:48px;background:#0F7B41;border-radius:9px;"></div>
<span class="t" style="left:2719.36px;top:15.36px;font-size:26.5px;line-height:26.5px;color:#FFFFFF;font-weight:400;transform:scaleX(0.9439);">Share</span>
<span class="t" style="left:2501.44px;top:386.87px;font-size:28.5px;line-height:28.5px;color:#242424;font-weight:400;transform:scaleX(1.0370);-webkit-text-stroke:0.55px #242424;">Auto</span>
<div class="b" style="left:2164px;top:448px;width:580px;height:116px;background:#EBEBEB;border-radius:20px;"></div>
<span class="t" style="left:2197.81px;top:472.02px;font-size:29.5px;line-height:29.5px;color:#242424;font-weight:400;transform:scaleX(0.9645);">separate the data highlighted into</span>
<span class="t" style="left:2197.84px;top:512.02px;font-size:29.5px;line-height:29.5px;color:#242424;font-weight:400;transform:scaleX(0.9313);">separate columns</span>
<span class="t" style="left:2207.49px;top:595.64px;font-size:27px;line-height:27px;color:#595959;font-weight:400;transform:scaleX(1.1046);-webkit-text-stroke:0.55px #595959;">Copilot</span>
<span class="t" style="left:2228.97px;top:662.47px;font-size:28.5px;line-height:28.5px;color:#242424;font-weight:400;transform:scaleX(1.0257);-webkit-text-stroke:0.55px #242424;">Setting formats and structure</span>
<span class="t" style="left:2227.93px;top:715.25px;font-size:29px;line-height:29px;color:#616161;font-weight:400;transform:scaleX(0.9610);">I will verify the values from the data, clear</span>
<span class="t" style="left:2228.70px;top:755.15px;font-size:29px;line-height:29px;color:#616161;font-weight:400;transform:scaleX(0.9628);">previous entries, and write the split data</span>
<span class="t" style="left:2228.61px;top:795.05px;font-size:29px;line-height:29px;color:#616161;font-weight:400;transform:scaleX(0.9766);">into a structured range. I plan to format</span>
<span class="t" style="left:2230.08px;top:834.95px;font-size:29px;line-height:29px;color:#616161;font-weight:400;transform:scaleX(0.9470);">the date, set revenue numbers, and</span>
<span class="t" style="left:2228.70px;top:874.85px;font-size:29px;line-height:29px;color:#616161;font-weight:400;transform:scaleX(0.9621);">possibly apply a currency format.</span>
<span class="t" style="left:2230.44px;top:914.75px;font-size:29px;line-height:29px;color:#616161;font-weight:400;transform:scaleX(0.9766);">Additionally, I'll convert this data into an</span>
<span class="t" style="left:2228.21px;top:954.65px;font-size:29px;line-height:29px;color:#616161;font-weight:400;transform:scaleX(0.9640);">Excel table for better usability.</span>
<span class="t" style="left:2177.26px;top:1263.19px;font-size:24.7px;line-height:24.7px;color:#242424;font-weight:400;transform:scaleX(0.9565);">Edit</span>
<div class="b" style="left:2150px;top:1316px;width:628px;height:165px;background:#FFFFFF;border:1px solid #E0E0E0;border-radius:28px;box-shadow:0 2px 3px rgba(0,0,0,0.28);"></div>
<span class="t" style="left:2185.68px;top:1342.42px;font-size:28.8px;line-height:28.8px;color:#707070;font-weight:400;transform:scaleX(0.9819);">Describe what you'd like to edit</span>
<div class="b" style="left:2186px;top:1338px;width:2px;height:37px;background:#242424;"></div>
<div class="b" style="left:203px;top:68px;width:2px;height:178px;background:#D1D1D1;"></div>
<div class="b" style="left:675px;top:68px;width:2px;height:178px;background:#D1D1D1;"></div>
<div class="b" style="left:1084px;top:68px;width:2px;height:178px;background:#D1D1D1;"></div>
<div class="b" style="left:1299px;top:68px;width:2px;height:178px;background:#D1D1D1;"></div>
<div class="b" style="left:1668px;top:68px;width:2px;height:178px;background:#D1D1D1;"></div>
<div class="b" style="left:1885px;top:68px;width:2px;height:178px;background:#D1D1D1;"></div>
<div class="b" style="left:2097px;top:68px;width:2px;height:178px;background:#D1D1D1;"></div>
<div class="b" style="left:2222px;top:68px;width:2px;height:178px;background:#D1D1D1;"></div>
<div class="b" style="left:2342px;top:68px;width:2px;height:178px;background:#D1D1D1;"></div>
<div class="b" style="left:2743px;top:68px;width:2px;height:178px;background:#D1D1D1;"></div>
<div class="b" style="left:960px;top:80px;width:2px;height:124px;background:#D1D1D1;"></div>
<svg class="i" style="left:180px;top:230px;" width="17" height="17" viewBox="0 0 17 17"><path d="M1.5 13.5 V1.5 H14" fill="none" stroke="#111" stroke-width="1.9" stroke-linecap="round"/><path d="M6 6 L15 15 M7 15 H15 V7" fill="none" stroke="#111" stroke-width="1.9" stroke-linecap="round"/></svg>
<svg class="i" style="left:652px;top:230px;" width="17" height="17" viewBox="0 0 17 17"><path d="M1.5 13.5 V1.5 H14" fill="none" stroke="#111" stroke-width="1.9" stroke-linecap="round"/><path d="M6 6 L15 15 M7 15 H15 V7" fill="none" stroke="#111" stroke-width="1.9" stroke-linecap="round"/></svg>
<svg class="i" style="left:1062px;top:230px;" width="17" height="17" viewBox="0 0 17 17"><path d="M1.5 13.5 V1.5 H14" fill="none" stroke="#111" stroke-width="1.9" stroke-linecap="round"/><path d="M6 6 L15 15 M7 15 H15 V7" fill="none" stroke="#111" stroke-width="1.9" stroke-linecap="round"/></svg>
<svg class="i" style="left:1276px;top:230px;" width="17" height="17" viewBox="0 0 17 17"><path d="M1.5 13.5 V1.5 H14" fill="none" stroke="#111" stroke-width="1.9" stroke-linecap="round"/><path d="M6 6 L15 15 M7 15 H15 V7" fill="none" stroke="#111" stroke-width="1.9" stroke-linecap="round"/></svg>
<svg class="i" style="left:24px;top:76px;" width="56" height="62" viewBox="0 0 56 62">
<rect x="1.2" y="9.5" width="40" height="45" fill="#F9DC9C" stroke="#D8701C" stroke-width="2.4"/>
<rect x="6.5" y="15" width="29.5" height="34" fill="#FAFAFA"/>
<path d="M9 16.5 V9 H16 Q16 1 21.5 1 Q27 1 27 9 H34 V16.5 Z" fill="#FFFFFF" stroke="#777" stroke-width="2"/>
<rect x="27.5" y="25" width="25.5" height="33.5" fill="#FAFAFA" stroke="#333" stroke-width="2.2"/>
</svg>
<svg class="i" style="left:37.6px;top:185.3px;" width="15.100000000000001" height="10.099999999999994" viewBox="0 0 15.100000000000001 10.099999999999994"><path d="M3.00 3.00 L7.55 7.10 L12.10 3.00" fill="none" stroke="#242424" stroke-width="2.0" stroke-linecap="round" stroke-linejoin="round"/></svg>
<svg class="i" style="left:104px;top:72px;" width="24" height="36" viewBox="0 0 24 36">
<path d="M6 2 L18 26 M18 2 L6 26" stroke="#333" stroke-width="1.6" fill="none"/>
<circle cx="5.5" cy="29.5" r="3.3" fill="#fff" stroke="#1B87D9" stroke-width="2.2"/>
<circle cx="18.5" cy="29.5" r="3.3" fill="#fff" stroke="#1B87D9" stroke-width="2.2"/>
</svg>
<svg class="i" style="left:99px;top:125px;" width="35" height="35" viewBox="0 0 35 35">
<path d="M2 1.5 H14 L18 5.5 V26.5 H2 Z" fill="#FAFAFA" stroke="#333" stroke-width="2"/>
<path d="M13.5 8.5 H24 L31.5 16 V32 H13.5 Z" fill="#FAFAFA" stroke="#333" stroke-width="2"/>
<path d="M17.5 21.5 H27 M17.5 26 H27" stroke="#333" stroke-width="1.8"/>
</svg>
<svg class="i" style="left:156.5px;top:137.7px;" width="14.900000000000006" height="10.0" viewBox="0 0 14.900000000000006 10.0"><path d="M3.00 3.00 L7.45 7.00 L11.90 3.00" fill="none" stroke="#242424" stroke-width="2.0" stroke-linecap="round" stroke-linejoin="round"/></svg>
<svg class="i" style="left:99px;top:177px;" width="35" height="34" viewBox="0 0 35 34">
<path d="M2 19 L16 14 L23 21 L15 31 Z" fill="#F9DC9C" stroke="#D8701C" stroke-width="2.2" stroke-linejoin="round"/>
<path d="M8 22 L15 31" stroke="#D8701C" stroke-width="2"/>
<path d="M14 12 L19 7 L27 15 L22 20 Z" fill="#fff" stroke="#333" stroke-width="2" stroke-linejoin="round"/>
<path d="M23 11 L30.5 3.5 Q32 2 33 3.5 Q34 5 32.5 6.5 L25.5 13.5" fill="#fff" stroke="#333" stroke-width="2"/>
</svg>
<div class="b" style="left:220px;top:82px;width:120px;height:47px;border:2px solid #8A8A8A;border-radius:8px;background:#fff;"></div>
<span class="t" style="left:225.26px;top:94.57px;font-size:22px;line-height:22px;color:#1F1F1F;font-weight:400;">Arial Unicode MS</span>
<span class="t" style="left:235.82px;top:154.64px;font-size:27px;line-height:27px;color:#242424;font-weight:700;transform:scaleX(0.8745);">B</span>
<span class="t" style="left:624.95px;top:93.14px;font-size:27px;line-height:27px;color:#242424;font-weight:400;transform:scaleX(0.9719);">A</span>
<svg class="i" style="left:640px;top:90px;" width="13.700000000000045" height="10" viewBox="0 0 13.700000000000045 10"><path d="M3.00 3.00 L6.85 7.00 L10.70 3.00" fill="none" stroke="#1B87D9" stroke-width="2" stroke-linecap="round" stroke-linejoin="round"/></svg>
<span class="t" style="left:599.95px;top:157.14px;font-size:27px;line-height:27px;color:#242424;font-weight:400;transform:scaleX(0.9495);">A</span>
<div class="b" style="left:608px;top:178px;width:14px;height:8px;background:#E00000;"></div>
<svg class="i" style="left:636.5px;top:165.2px;" width="14.700000000000045" height="10.600000000000023" viewBox="0 0 14.700000000000045 10.600000000000023"><path d="M3.00 3.00 L7.35 7.60 L11.70 3.00" fill="none" stroke="#242424" stroke-width="2.0" stroke-linecap="round" stroke-linejoin="round"/></svg>
<svg class="i" style="left:702px;top:89px;" width="60" height="20" viewBox="0 0 60 20"><path d="M0.00 2.00 H28.00" stroke="#242424" stroke-width="2.2"/><path d="M4.50 10.00 H24.00" stroke="#242424" stroke-width="2.2"/><path d="M0.00 18.00 H28.00" stroke="#242424" stroke-width="2.2"/></svg>
<div class="b" style="left:744px;top:82px;width:48px;height:48px;border:2px solid #616161;border-radius:9px;background:#EBEBEB;"></div>
<svg class="i" style="left:754px;top:94.3px;" width="60" height="20.5" viewBox="0 0 60 20.5"><path d="M0.00 2.00 H28.00" stroke="#242424" stroke-width="2.2"/><path d="M4.00 10.20 H24.00" stroke="#242424" stroke-width="2.2"/><path d="M0.00 18.50 H28.00" stroke="#242424" stroke-width="2.2"/></svg>
<svg class="i" style="left:806px;top:102.5px;" width="60" height="20.5" viewBox="0 0 60 20.5"><path d="M0.00 2.00 H28.00" stroke="#242424" stroke-width="2.2"/><path d="M4.00 10.30 H24.00" stroke="#242424" stroke-width="2.2"/><path d="M0.00 18.50 H28.00" stroke="#242424" stroke-width="2.2"/></svg>
<svg class="i" style="left:852px;top:86px;" width="40" height="38" viewBox="0 0 40 38">
<text x="0" y="0" font-family="Liberation Sans" font-size="21" fill="#333" transform="translate(9,31) rotate(-50)">ab</text>
<path d="M14 33 L34 12 M26 12 H34 V20" stroke="#1B87D9" stroke-width="2.2" fill="none"/>
</svg>
<svg class="i" style="left:898.6px;top:101px;" width="14.600000000000023" height="11.299999999999997" viewBox="0 0 14.600000000000023 11.299999999999997"><path d="M3.00 3.00 L7.30 8.30 L11.60 3.00" fill="none" stroke="#242424" stroke-width="2.0" stroke-linecap="round" stroke-linejoin="round"/></svg>
<svg class="i" style="left:985px;top:90px;" width="34" height="36" viewBox="0 0 34 36">
<text x="3" y="14" font-family="Liberation Sans" font-size="17" fill="#333">ab</text>
<text x="3" y="30" font-family="Liberation Sans" font-size="17" fill="#333">c</text>
<path d="M26 15 Q31 19 27 25 Q24 28 15 26.5 M19 22 L15 26.5 L19.5 31" stroke="#1B87D9" stroke-width="2" fill="none"/>
</svg>
<div class="b" style="left:692px;top:146px;width:48px;height:48px;border:2px solid #616161;border-radius:9px;background:#EBEBEB;"></div>
<svg class="i" style="left:702px;top:154.3px;" width="60" height="28.899999999999977" viewBox="0 0 60 28.899999999999977"><path d="M0.00 2.00 H28.00" stroke="#242424" stroke-width="2.2"/><path d="M0.00 10.40 H20.00" stroke="#242424" stroke-width="2.2"/><path d="M0.00 18.50 H28.00" stroke="#242424" stroke-width="2.2"/><path d="M0.00 26.90 H20.00" stroke="#242424" stroke-width="2.2"/></svg>
<svg class="i" style="left:754px;top:154.3px;" width="60" height="28.899999999999977" viewBox="0 0 60 28.899999999999977"><path d="M0.00 2.00 H28.00" stroke="#242424" stroke-width="2.2"/><path d="M4.00 10.40 H24.00" stroke="#242424" stroke-width="2.2"/><path d="M0.00 18.50 H28.00" stroke="#242424" stroke-width="2.2"/><path d="M4.00 26.90 H24.00" stroke="#242424" stroke-width="2.2"/></svg>
<svg class="i" style="left:806px;top:154.3px;" width="60" height="28.899999999999977" viewBox="0 0 60 28.899999999999977"><path d="M0.00 2.00 H28.00" stroke="#242424" stroke-width="2.2"/><path d="M8.00 10.40 H28.00" stroke="#242424" stroke-width="2.2"/><path d="M0.00 18.50 H28.00" stroke="#242424" stroke-width="2.2"/><path d="M8.00 26.90 H28.00" stroke="#242424" stroke-width="2.2"/></svg>
<svg class="i" style="left:858px;top:154.3px;" width="60" height="28.899999999999977" viewBox="0 0 60 28.899999999999977"><path d="M0.00 2.00 H28.00" stroke="#242424" stroke-width="2.2"/><path d="M18.00 10.40 H28.00" stroke="#242424" stroke-width="2.2"/><path d="M18.00 18.50 H28.00" stroke="#242424" stroke-width="2.2"/><path d="M0.00 26.90 H28.00" stroke="#242424" stroke-width="2.2"/></svg>
<svg class="i" style="left:857px;top:160px;" width="16" height="12" viewBox="0 0 16 12"><path d="M15 6 H2 M7 1 L2 6 L7 11" stroke="#1B87D9" stroke-width="2.2" fill="none"/></svg>
<svg class="i" style="left:910px;top:154.3px;" width="60" height="28.899999999999977" viewBox="0 0 60 28.899999999999977"><path d="M0.00 2.00 H28.00" stroke="#242424" stroke-width="2.2"/><path d="M16.00 10.40 H28.00" stroke="#242424" stroke-width="2.2"/><path d="M16.00 18.50 H28.00" stroke="#242424" stroke-width="2.2"/><path d="M0.00 26.90 H28.00" stroke="#242424" stroke-width="2.2"/></svg>
<svg class="i" style="left:909px;top:160px;" width="16" height="12" viewBox="0 0 16 12"><path d="M1 6 H14 M9 1 L14 6 L9 11" stroke="#1B87D9" stroke-width="2.2" fill="none"/></svg>
<svg class="i" style="left:981px;top:153px;" width="33" height="32" viewBox="0 0 33 32">
<rect x="1.5" y="1.5" width="29" height="28.5" fill="#fff" stroke="#333" stroke-width="2.2"/>
<path d="M16 1.5 V30" stroke="#333" stroke-width="1.6"/>
<rect x="1.5" y="7.5" width="29" height="16" fill="#FAFAFA" stroke="#1B87D9" stroke-width="2.2"/>
<path d="M6 15.5 H26 M10 11.5 L6 15.5 L10 19.5 M22 11.5 L26 15.5 L22 19.5" stroke="#1B87D9" stroke-width="2" fill="none"/>
</svg>
<svg class="i" style="left:1038.3px;top:165.2px;" width="15.299999999999955" height="10.600000000000023" viewBox="0 0 15.299999999999955 10.600000000000023"><path d="M3.00 3.00 L7.65 7.60 L12.30 3.00" fill="none" stroke="#242424" stroke-width="2.0" stroke-linecap="round" stroke-linejoin="round"/></svg>
<div class="b" style="left:1102px;top:66px;width:182px;height:48px;border:2px solid #8A8A8A;border-radius:9px;background:#fff;"></div>
<span class="t" style="left:1106.42px;top:77.36px;font-size:24.5px;line-height:24.5px;color:#242424;font-weight:400;transform:scaleX(0.8755);">General</span>
<svg class="i" style="left:1263.2px;top:85.6px;" width="15.200000000000045" height="11.400000000000006" viewBox="0 0 15.200000000000045 11.400000000000006"><path d="M3.00 3.00 L7.60 8.40 L12.20 3.00" fill="none" stroke="#242424" stroke-width="2.0" stroke-linecap="round" stroke-linejoin="round"/></svg>
<svg class="i" style="left:1108px;top:130px;" width="38" height="30" viewBox="0 0 38 30">
<path d="M20 21.5 H2.2 V3 H33.2 V10" fill="#FAFAFA" stroke="#242424" stroke-width="2.2"/>
<text x="5.5" y="18" font-family="Liberation Sans" font-size="15" fill="#242424">C</text>
<path d="M16 17.5 Q14 14 16.5 9 Q18 6.5 21 7" fill="none" stroke="#242424" stroke-width="1.6"/>
<path d="M18.5 13 V24.5 Q26 30 33.5 24.5 V13" fill="#FAFAFA" stroke="#D8701C" stroke-width="2.2"/>
<ellipse cx="26" cy="13" rx="7.5" ry="3.2" fill="#FCE7A6" stroke="#D8701C" stroke-width="2.2"/>
<path d="M18.5 19 Q26 23.5 33.5 19" fill="none" stroke="#D8701C" stroke-width="2"/>
</svg>
<svg class="i" style="left:1156px;top:136.9px;" width="15.700000000000045" height="10.900000000000006" viewBox="0 0 15.700000000000045 10.900000000000006"><path d="M3.00 3.00 L7.85 7.90 L12.70 3.00" fill="none" stroke="#242424" stroke-width="2.0" stroke-linecap="round" stroke-linejoin="round"/></svg>
<svg class="i" style="left:1190px;top:125px;" width="36" height="34" viewBox="0 0 36 34"><ellipse cx="10" cy="10.2" rx="5.8" ry="6.6" fill="none" stroke="#333" stroke-width="2"/><ellipse cx="26.1" cy="24.2" rx="5.8" ry="6.6" fill="none" stroke="#333" stroke-width="2"/><path d="M27.3 3 L8.5 30.8" stroke="#333" stroke-width="2"/></svg>
<svg class="i" style="left:1252px;top:129px;" width="18" height="28" viewBox="0 0 18 28"><path d="M6 2 Q15 1 16 10 Q16 21 3 26 L2 24 Q9 20 10 15 Q2 15 2 8 Q2 2 6 2 Z" fill="#333"/></svg>
<svg class="i" style="left:1108px;top:174px;" width="40" height="38" viewBox="0 0 40 38">
<path d="M19 13 H3.5 M9 7.5 L3.5 13 L9 18.5" stroke="#1B87D9" stroke-width="2.2" fill="none"/>
<text x="33" y="18" font-family="Liberation Sans" font-size="19.5" fill="#333" text-anchor="end">.0</text>
<text x="33" y="34" font-family="Liberation Sans" font-size="19.5" fill="#333" text-anchor="end">.00</text>
</svg>
<svg class="i" style="left:1160px;top:174px;" width="40" height="38" viewBox="0 0 40 38">
<text x="33" y="18" font-family="Liberation Sans" font-size="19.5" fill="#333" text-anchor="end">.00</text>
<path d="M2 27 H17.5 M12 21.5 L17.5 27 L12 32.5" stroke="#1B87D9" stroke-width="2.2" fill="none"/>
<text x="33" y="34" font-family="Liberation Sans" font-size="19.5" fill="#333" text-anchor="end">.0</text>
</svg>
<svg class="i" style="left:1310px;top:65px;" width="50" height="150" viewBox="0 0 50 150">
<path d="M14.4 20.3 H45.6 M14.4 29.7 H45.6 M39 11.1 V38.7 M26.6 11.1 V38.7" stroke="#7A7A7A" stroke-width="1.6"/>
<rect x="14.4" y="11.1" width="31.2" height="27.6" fill="none" stroke="#333" stroke-width="2.1"/>
<rect x="21" y="12" width="10.5" height="8" fill="#F9A3AB" stroke="#E0141E" stroke-width="2"/>
<rect x="21" y="21" width="5.5" height="8.5" fill="#8EC2F0" stroke="#1B6EC2" stroke-width="2"/>
<rect x="21" y="30" width="14.2" height="7.8" fill="#F9A3AB" stroke="#E0141E" stroke-width="2"/>
<path d="M14.4 90.2 V63.6 H45.6 V70" fill="none" stroke="#333" stroke-width="2.1"/>
<path d="M14.4 72 H24 M14.4 81.9 H24 M26.6 63.6 V71.4 M39 63.6 V71.4" stroke="#7A7A7A" stroke-width="1.6"/>
<path d="M24.5 90 V72.2 H44.8 V90" fill="#8EC2F0" stroke="#1B6EC2" stroke-width="2"/>
<path d="M30 88 L43.5 73.5 Q45.5 71.5 46 73.5 L33.5 89" fill="#fff" stroke="#333" stroke-width="1.7"/>
<path d="M20 92.5 Q22 86 27 84.5 Q31 84 32 87.5 Q31.5 92 20 92.5 Z" fill="#1B6EC2"/>
<path d="M14.4 142.3 V116.6 H45.6 V123" fill="none" stroke="#333" stroke-width="2.1"/>
<path d="M14.4 125 H21 M14.4 135 H21 M20.5 116.6 V121 M39.8 116.6 V121" stroke="#7A7A7A" stroke-width="1.6"/>
<path d="M21.5 137.5 V122 H39.5 V130" fill="#8EC2F0" stroke="#1B6EC2" stroke-width="2.2"/>
<path d="M28 140 L43.5 124.5 Q45.5 122.5 46 124.5 L31.5 141" fill="#fff" stroke="#333" stroke-width="1.7"/>
<path d="M18 144.5 Q20 138 25 136.5 Q29 136 30 139.5 Q29.5 144 18 144.5 Z" fill="#1B6EC2"/>
</svg>
<svg class="i" style="left:1616.6px;top:85.6px;" width="16.40000000000009" height="10.400000000000006" viewBox="0 0 16.40000000000009 10.400000000000006"><path d="M3.00 3.00 L8.20 7.40 L13.40 3.00" fill="none" stroke="#242424" stroke-width="2.0" stroke-linecap="round" stroke-linejoin="round"/></svg>
<svg class="i" style="left:1535.7px;top:136.9px;" width="16.299999999999955" height="11.400000000000006" viewBox="0 0 16.299999999999955 11.400000000000006"><path d="M3.00 3.00 L8.15 8.40 L13.30 3.00" fill="none" stroke="#242424" stroke-width="2.0" stroke-linecap="round" stroke-linejoin="round"/></svg>
<svg class="i" style="left:1478.2px;top:189.3px;" width="15.599999999999909" height="11.0" viewBox="0 0 15.599999999999909 11.0"><path d="M3.00 3.00 L7.80 8.00 L12.60 3.00" fill="none" stroke="#242424" stroke-width="2.0" stroke-linecap="round" stroke-linejoin="round"/></svg>
<svg class="i" style="left:1692px;top:75px;" width="35" height="31" viewBox="0 0 35 31">
<path d="M1.5 1.5 H32 V29 H1.5 Z M12 1.5 V29 M22.5 1.5 V29" fill="none" stroke="#333" stroke-width="2"/>
<rect x="12" y="9" width="21" height="12.5" fill="#9FCBF2" stroke="#1B6EC2" stroke-width="2.2"/>
<path d="M15 15 H2.5 M8 9.5 L2.5 15 L8 20.5" stroke="#1B87D9" stroke-width="2.2" fill="none"/>
</svg>
<svg class="i" style="left:1827px;top:85.3px;" width="15.799999999999955" height="10.5" viewBox="0 0 15.799999999999955 10.5"><path d="M3.00 3.00 L7.90 7.50 L12.80 3.00" fill="none" stroke="#242424" stroke-width="2.0" stroke-linecap="round" stroke-linejoin="round"/></svg>
<svg class="i" style="left:1692px;top:127px;" width="35" height="31" viewBox="0 0 35 31">
<path d="M1.5 1.5 H32 M1.5 29 H32 M1.5 1.5 V9 M1.5 21.5 V29 M32 1.5 V9 M32 21.5 V29 M12 1.5 V9 M22.5 1.5 V9 M12 21.5 V29 M22.5 21.5 V29" fill="none" stroke="#333" stroke-width="2"/>
<rect x="7" y="9" width="11" height="12.5" fill="#9FCBF2" stroke="#1B6EC2" stroke-width="2.2"/>
<path d="M21 10 L31 20.5 M31 10 L21 20.5" stroke="#E02030" stroke-width="2.2"/>
</svg>
<svg class="i" style="left:1838.3px;top:137.2px;" width="15.299999999999955" height="10.600000000000023" viewBox="0 0 15.299999999999955 10.600000000000023"><path d="M3.00 3.00 L7.65 7.60 L12.30 3.00" fill="none" stroke="#242424" stroke-width="2.0" stroke-linecap="round" stroke-linejoin="round"/></svg>
<svg class="i" style="left:1692px;top:177px;" width="35" height="34" viewBox="0 0 35 34">
<path d="M7 3 V7 M7 5 H26 M26 3 V7" stroke="#1B87D9" stroke-width="2"/>
<path d="M1.5 9 V32 H32 V9 M1.5 18.5 H32 M1.5 26 H32 M12 9 V32 M22.5 9 V32" fill="none" stroke="#333" stroke-width="2"/>
<rect x="9" y="13.5" width="16" height="10" fill="#9FCBF2" stroke="#1B6EC2" stroke-width="2.2"/>
</svg>
<svg class="i" style="left:1814.9px;top:189.6px;" width="14.799999999999955" height="10.700000000000017" viewBox="0 0 14.799999999999955 10.700000000000017"><path d="M3.00 3.00 L7.40 7.70 L11.80 3.00" fill="none" stroke="#242424" stroke-width="2.0" stroke-linecap="round" stroke-linejoin="round"/></svg>
<svg class="i" style="left:1913px;top:75px;" width="27" height="31" viewBox="0 0 27 31"><path d="M24.5 5 V2 H2.5 L14 15 L2.5 28 H24.5 V25" fill="none" stroke="#333" stroke-width="2.2"/></svg>
<svg class="i" style="left:1966.4px;top:85px;" width="15.0" height="11" viewBox="0 0 15.0 11"><path d="M3.00 3.00 L7.50 8.00 L12.00 3.00" fill="none" stroke="#242424" stroke-width="2.0" stroke-linecap="round" stroke-linejoin="round"/></svg>
<svg class="i" style="left:2009px;top:73px;" width="36" height="35" viewBox="0 0 36 35">
<text x="0" y="14" font-family="Liberation Sans" font-weight="bold" font-size="17" fill="#1B87D9">A</text>
<text x="0" y="33" font-family="Liberation Sans" font-size="18" fill="#333">Z</text>
<path d="M15 9 H33 L26 18 V26 H22 V18 Z" fill="#fff" stroke="#333" stroke-width="2"/>
</svg>
<svg class="i" style="left:2052px;top:85px;" width="15.300000000000182" height="11" viewBox="0 0 15.300000000000182 11"><path d="M3.00 3.00 L7.65 8.00 L12.30 3.00" fill="none" stroke="#242424" stroke-width="2.0" stroke-linecap="round" stroke-linejoin="round"/></svg>
<svg class="i" style="left:1909px;top:127px;" width="35" height="31" viewBox="0 0 35 31">
<rect x="2" y="2" width="30" height="27" fill="#FAFAFA" stroke="#333" stroke-width="2.2"/>
<path d="M2 7 H32" stroke="#333" stroke-width="2"/>
<path d="M17 11 V23 M11.5 17.5 L17 23 L22.5 17.5" stroke="#1B87D9" stroke-width="2.2" fill="none"/>
</svg>
<svg class="i" style="left:1953px;top:137.2px;" width="14.400000000000091" height="10.600000000000023" viewBox="0 0 14.400000000000091 10.600000000000023"><path d="M3.00 3.00 L7.20 7.60 L11.40 3.00" fill="none" stroke="#242424" stroke-width="2.0" stroke-linecap="round" stroke-linejoin="round"/></svg>
<svg class="i" style="left:2010px;top:125px;" width="34" height="34" viewBox="0 0 34 34">
<circle cx="21" cy="12" r="9.5" fill="#FAFAFA" stroke="#333" stroke-width="2.2"/>
<path d="M14 19 L2 31" stroke="#333" stroke-width="2.2"/>
</svg>
<svg class="i" style="left:2052px;top:137.2px;" width="15.300000000000182" height="10.600000000000023" viewBox="0 0 15.300000000000182 10.600000000000023"><path d="M3.00 3.00 L7.65 7.60 L12.30 3.00" fill="none" stroke="#242424" stroke-width="2.0" stroke-linecap="round" stroke-linejoin="round"/></svg>
<svg class="i" style="left:1909px;top:178px;" width="33" height="33" viewBox="0 0 33 33">
<path d="M14 2 L31 14 L18 30 L1.5 18 Z" fill="#FAFAFA" stroke="#8E35A8" stroke-width="2.2" stroke-linejoin="miter"/>
<path d="M1.5 18 L8 10 L24.5 22 L18 30 Z" fill="#DDA0E2" stroke="#8E35A8" stroke-width="2.2"/>
</svg>
<svg class="i" style="left:1909px;top:178px;" width="33" height="33" viewBox="0 0 33 33"><path d="M8.5 9.5 L15 1.8 L31.5 14 L18 30.5 L1.5 18.5 Z" fill="none" stroke="#8E35A8" stroke-width="2.2"/></svg>
<svg class="i" style="left:1953px;top:189.6px;" width="14.400000000000091" height="10.700000000000017" viewBox="0 0 14.400000000000091 10.700000000000017"><path d="M3.00 3.00 L7.20 7.70 L11.40 3.00" fill="none" stroke="#242424" stroke-width="2.0" stroke-linecap="round" stroke-linejoin="round"/></svg>
<svg class="i" style="left:2132px;top:75px;" width="58" height="58" viewBox="0 0 58 58">
<rect x="1.5" y="1.5" width="55" height="55" fill="none" stroke="#D83B01" stroke-width="2.6"/>
<rect x="7.5" y="7.5" width="18" height="18" fill="none" stroke="#D83B01" stroke-width="2.4"/>
<rect x="32" y="7.5" width="18" height="18" fill="none" stroke="#D83B01" stroke-width="2.4"/>
<rect x="7.5" y="32" width="18" height="18" fill="none" stroke="#D83B01" stroke-width="2.4"/>
<rect x="32" y="32" width="18" height="18" fill="none" stroke="#D83B01" stroke-width="2.4"/>
</svg>
<svg class="i" style="left:2245px;top:68px;" width="80" height="72" viewBox="0 0 80 72">
<defs>
<linearGradient id="cgL" x1="0" y1="0" x2="0" y2="1"><stop offset="0" stop-color="#34BDF8"/><stop offset="0.28" stop-color="#0E92E2"/><stop offset="0.6" stop-color="#57B46A"/><stop offset="0.85" stop-color="#C4C128"/><stop offset="1" stop-color="#FFC600"/></linearGradient>
<linearGradient id="cgT" x1="0" y1="0" x2="1" y2="1"><stop offset="0" stop-color="#0A36C4"/><stop offset="1" stop-color="#1C78E4"/></linearGradient>
<linearGradient id="cgR" x1="1" y1="0" x2="0" y2="1"><stop offset="0" stop-color="#A04AE8"/><stop offset="0.5" stop-color="#EE5590"/><stop offset="1" stop-color="#FDAE58"/></linearGradient>
<linearGradient id="cgO" x1="0" y1="0" x2="1" y2="1"><stop offset="0" stop-color="#FF9A50"/><stop offset="1" stop-color="#E03A2C"/></linearGradient>
</defs>
<path d="M40 9 H47 Q52 9 53.5 14 L55 19.5 Q56.5 24 61 24 H37.5 Z" fill="url(#cgT)"/>
<path d="M18 47.5 H40.7 L36 62.5 H32 Q28.5 62 27.5 58 L26 52.5 Q24.5 48 20 47.5 Z" fill="url(#cgO)"/>
<path d="M25 9 H42 L30.5 47.5 H14 Q9.5 47.5 10 42.5 L16.5 17 Q18.5 9 25 9 Z" fill="url(#cgL)"/>
<path d="M48 24 H63 Q68.5 24 68 30 L61.5 53 Q58.5 62.5 51.5 62.5 H36 Z" fill="url(#cgR)"/>
</svg>
<svg class="i" style="left:2415px;top:72px;" width="65" height="70" viewBox="0 0 65 70"><path d="M27 53 H13 Q9.3 53 9.3 49 V13 Q9.3 9 13 9 H35 L45 19 V34" fill="none" stroke="#4A82E0" stroke-width="2"/><path d="M26.5 19 V27 Q26 34 17 39 M28.5 30.5 Q33 33 38.5 33" fill="none" stroke="#4A82E0" stroke-width="1.6"/><rect x="39" y="36" width="19" height="10" rx="5" transform="rotate(-40 48.5 41)" fill="none" stroke="#4A82E0" stroke-width="2.2"/><rect x="28" y="49" width="19" height="10" rx="5" transform="rotate(-40 37.5 54)" fill="none" stroke="#4A82E0" stroke-width="2.2"/><path d="M38 45 L47 54" stroke="#fff" stroke-width="3"/></svg>
<svg class="i" style="left:2601px;top:72px;" width="65" height="70" viewBox="0 0 65 70"><path d="M27 53 H13 Q9.3 53 9.3 49 V13 Q9.3 9 13 9 H35 L45 19 V34" fill="none" stroke="#4A82E0" stroke-width="2"/><path d="M26.5 19 V27 Q26 34 17 39 M28.5 30.5 Q33 33 38.5 33" fill="none" stroke="#4A82E0" stroke-width="1.6"/><rect x="33" y="41" width="25" height="19" rx="2.5" fill="#fff" stroke="#4A82E0" stroke-width="2.2"/><path d="M34 43 L45.5 52 L57 43" fill="none" stroke="#4A82E0" stroke-width="2"/></svg>
<svg class="i" style="left:2787.5px;top:223.2px;" width="23.09999999999991" height="15.400000000000006" viewBox="0 0 23.09999999999991 15.400000000000006"><path d="M3.10 3.10 L11.55 12.30 L20.00 3.10" fill="none" stroke="#333" stroke-width="2.2" stroke-linecap="round" stroke-linejoin="round"/></svg>
<div class="b" style="left:-20px;top:274px;width:703px;height:44px;background:#FFFFFF;border:1px solid #D3D3D3;border-radius:7px;"></div>
<svg class="i" style="left:660.7px;top:289.9px;" width="23.199999999999932" height="15.100000000000023" viewBox="0 0 23.199999999999932 15.100000000000023"><path d="M3.10 3.10 L11.60 12.00 L20.10 3.10" fill="none" stroke="#242424" stroke-width="2.2" stroke-linecap="round" stroke-linejoin="round"/></svg>
<svg class="i" style="left:700px;top:284px;" width="8" height="24" viewBox="0 0 8 24"><circle cx="4" cy="3.5" r="2.3" fill="#333"/><circle cx="4" cy="12" r="2.3" fill="#333"/><circle cx="4" cy="20.5" r="2.3" fill="#333"/></svg>
<div class="b" style="left:724px;top:274px;width:169px;height:44px;background:#FFFFFF;border:1px solid #D3D3D3;border-radius:7px;"></div>
<svg class="i" style="left:735px;top:283px;" width="28" height="26" viewBox="0 0 28 26"><path d="M2 2 L26 24 M26 2 L2 24" stroke="#B5B5B5" stroke-width="2"/></svg>
<svg class="i" style="left:779px;top:283px;" width="36" height="26" viewBox="0 0 36 26"><path d="M2 13 L12 23 L33 2" stroke="#B5B5B5" stroke-width="2" fill="none"/></svg>
<span class="t" style="left:828px;top:276px;font-size:34px;line-height:34px;font-family:'Liberation Serif',serif;font-style:italic;color:#242424;">fx</span>
<svg class="i" style="left:869px;top:289.1px;" width="22.5" height="14.899999999999977" viewBox="0 0 22.5 14.899999999999977"><path d="M3.00 3.00 L11.25 11.90 L19.50 3.00" fill="none" stroke="#8A8A8A" stroke-width="2" stroke-linecap="round" stroke-linejoin="round"/></svg>
<div class="b" style="left:902px;top:274px;width:1960px;height:44px;background:#FFFFFF;border:1px solid #D3D3D3;border-radius:7px;"></div>
<span class="t" style="left:921.51px;top:283.56px;font-size:26.5px;line-height:26.5px;color:#242424;font-weight:400;transform:scaleX(1.0090);">Date</span>
<span class="t" style="left:1016.37px;top:283.56px;font-size:26.5px;line-height:26.5px;color:#242424;font-weight:400;transform:scaleX(0.9802);">Region</span>
<span class="t" style="left:1131.61px;top:283.56px;font-size:26.5px;line-height:26.5px;color:#242424;font-weight:400;transform:scaleX(0.9883);">Salesperson</span>
<span class="t" style="left:1290.30px;top:283.56px;font-size:26.5px;line-height:26.5px;color:#242424;font-weight:400;transform:scaleX(1.0106);">Product</span>
<span class="t" style="left:1407.32px;top:283.56px;font-size:26.5px;line-height:26.5px;color:#242424;font-weight:400;transform:scaleX(0.9579);">Revenue</span>
<span class="t" style="left:-14.82px;top:283.56px;font-size:26.5px;line-height:26.5px;color:#242424;font-weight:400;">A1</span>
<svg class="i" style="left:2797.3px;top:287.4px;" width="23.299999999999727" height="14.600000000000023" viewBox="0 0 23.299999999999727 14.600000000000023"><path d="M3.10 3.10 L11.65 11.50 L20.20 3.10" fill="none" stroke="#333" stroke-width="2.2" stroke-linecap="round" stroke-linejoin="round"/></svg>
<svg class="i" style="left:0px;top:336px;" width="15" height="30" viewBox="0 0 15 30"><path d="M14 1 V29 H-20 Z" fill="#B4B4B4"/></svg>
<svg class="i" style="left:2488px;top:16px;" width="24" height="24" viewBox="0 0 24 24"><path d="M2 2 H22 V16 H9 L4 21 V16 H2 Z" fill="none" stroke="#242424" stroke-width="2" stroke-linejoin="miter"/></svg>
<svg class="i" style="left:2686px;top:15px;" width="27" height="27" viewBox="0 0 27 27"><path d="M2 11 V25 H20 V20" fill="none" stroke="#fff" stroke-width="2"/><path d="M6 19 Q7 9 19 9 V4 L26 11 L19 18 V13 Q10 13 6 19 Z" fill="none" stroke="#fff" stroke-width="2" stroke-linejoin="round"/></svg>
<svg class="i" style="left:2797.3px;top:23px;" width="15.5" height="11" viewBox="0 0 15.5 11"><path d="M3.10 3.10 L7.75 7.90 L12.40 3.10" fill="none" stroke="#fff" stroke-width="2.2" stroke-linecap="round" stroke-linejoin="round"/></svg>
<svg class="i" style="left:2180px;top:387px;" width="33" height="24" viewBox="0 0 33 24"><path d="M1 2 H32 M1 12 H32 M1 21.5 H32" stroke="#B3B3B3" stroke-width="2"/></svg>
<svg class="i" style="left:2244px;top:383px;" width="32" height="34" viewBox="0 0 32 34"><path d="M15.5 2 Q22 7 30 7 V18 Q30 27 15.5 32 Q1.5 27 1.5 18 V7 Q9 7 15.5 2 Z" fill="none" stroke="#107C10" stroke-width="2.2" stroke-linejoin="round"/><path d="M9.5 17 L14 21.5 L22 13" fill="none" stroke="#107C10" stroke-width="2.2"/></svg>
<svg class="i" style="left:2573px;top:396.6px;" width="18.199999999999818" height="12.0" viewBox="0 0 18.199999999999818 12.0"><path d="M2.80 2.80 L9.10 9.20 L15.40 2.80" fill="none" stroke="#424242" stroke-width="1.6" stroke-linecap="round" stroke-linejoin="round"/></svg>
<div class="b" style="left:2636px;top:372px;width:56px;height:56px;background:#107C41;border-radius:15px;"></div>
<svg class="i" style="left:2650px;top:385px;" width="30" height="30" viewBox="0 0 30 30"><path d="M14 5 H7 Q3.5 5 3.5 8.5 V22.5 Q3.5 26 7 26 H21 Q24.5 26 24.5 22.5 V15" fill="none" stroke="#fff" stroke-width="2.4" stroke-linecap="round"/><path d="M12 17.5 L26.5 3" stroke="#fff" stroke-width="2.4" stroke-linecap="round"/></svg>
<svg class="i" style="left:2727px;top:387px;" width="27" height="27" viewBox="0 0 27 27"><path d="M2 2 L25 25 M25 2 L2 25" stroke="#242424" stroke-width="2.2"/></svg>
<svg class="i" style="left:2155px;top:585px;" width="50" height="45" viewBox="0 0 50 45"><g transform="translate(6.2,8.3) scale(0.43,0.411)" fill="none" stroke="#5E5E5E" stroke-width="4.2" stroke-linejoin="round"><path d="M40 9 H47 Q52 9 53.5 14 L55 19.5 Q56.5 24 61 24 H37.5 Z"/><path d="M18 47.5 H40.7 L36 62.5 H32 Q28.5 62 27.5 58 L26 52.5 Q24.5 48 20 47.5 Z"/><path d="M25 9 H42 L30.5 47.5 H14 Q9.5 47.5 10 42.5 L16.5 17 Q18.5 9 25 9 Z"/><path d="M48 24 H63 Q68.5 24 68 30 L61.5 53 Q58.5 62.5 51.5 62.5 H36 Z"/></g></svg>
<svg class="i" style="left:2172px;top:662px;" width="28" height="28" viewBox="0 0 28 28"><defs><linearGradient id="dg" x1="0" y1="0" x2="1" y2="0"><stop offset="0" stop-color="#3AA39A"/><stop offset="1" stop-color="#8CC26A"/></linearGradient></defs><circle cx="14" cy="14" r="13.6" fill="url(#dg)"/></svg>
<svg class="i" style="left:2619px;top:666px;" width="16" height="20" viewBox="0 0 16 20"><path d="M3 2 L12 10 L3 18" fill="none" stroke="#242424" stroke-width="2"/></svg>
<svg class="i" style="left:2241px;top:1269px;" width="18.300000000000182" height="11.599999999999909" viewBox="0 0 18.300000000000182 11.599999999999909"><path d="M2.80 2.80 L9.15 8.80 L15.50 2.80" fill="none" stroke="#B0B0B0" stroke-width="1.6" stroke-linecap="round" stroke-linejoin="round"/></svg>
<svg class="i" style="left:2186px;top:1416px;" width="32" height="32" viewBox="0 0 32 32"><path d="M16 1 V31 M1 16 H31" stroke="#242424" stroke-width="2.2"/></svg>
<svg class="i" style="left:2261px;top:1419px;" width="34" height="27" viewBox="0 0 34 27"><circle cx="6" cy="20" r="4.5" fill="none" stroke="#A8A8A8" stroke-width="2"/><circle cx="27" cy="7" r="4.5" fill="none" stroke="#A8A8A8" stroke-width="2"/><path d="M10 18 Q14 16 16 12 Q18 9 22.5 8.5" fill="none" stroke="#A8A8A8" stroke-width="2"/></svg>
<div class="b" style="left:2704px;top:1406px;width:52px;height:52px;border-radius:26px;background:#C9EBD7;"></div>
<div class="b" style="left:2718px;top:1420px;width:24px;height:24px;background:#107C41;border-radius:4px;"></div>
<span class="t" style="left:404.41px;top:229.22px;font-size:21px;line-height:21px;color:#424242;font-weight:400;transform:scaleX(0.9217);">Font</span>
<div class="b" style="left:290px;top:43px;width:320px;height:203px;background:#F3F3F3;border:1.5px solid #A9A9A9;border-radius:17px;box-shadow:0 14px 36px rgba(0,0,0,0.30), 0 0 20px rgba(0,0,0,0.12);"></div>
<div class="b" style="left:291px;top:106px;width:318px;height:2px;background:#DADADA;"></div>
<div class="b" style="left:418px;top:71px;width:64px;height:6px;background:#888888;border-radius:3px;"></div>
<svg class="i" style="left:560px;top:64px;" width="19" height="19" viewBox="0 0 19 19"><path d="M1.5 1.5 L17.5 17.5 M17.5 1.5 L1.5 17.5" stroke="#1A1A1A" stroke-width="2"/></svg>
<div class="b" style="left:403px;top:130px;width:94px;height:94px;border-radius:47px;background:#FAFAFA;border:2px solid #C9C9C9;"></div>
<svg class="i" style="left:434px;top:155px;" width="32" height="44" viewBox="0 0 32 44"><rect x="9.5" y="2" width="13" height="25" rx="6.5" fill="none" stroke="#7B1F86" stroke-width="2.4"/><path d="M2.5 21 Q2.5 34 16 34 Q29.5 34 29.5 21 M16 34 V42" fill="none" stroke="#7B1F86" stroke-width="2.4"/></svg>
<svg class="i" style="left:325px;top:159px;" width="35" height="36" viewBox="0 0 35 36"><g transform="translate(17.2,18) scale(0.87) translate(-17.5,-18)"><path d="M15 2.5 H20 L21 7.5 Q23.5 8.5 25.5 10 L30.5 8.2 L33 12.6 L29 16 Q29.5 18 29 20 L33 23.4 L30.5 27.8 L25.5 26 Q23.5 27.5 21 28.5 L20 33.5 H15 L14 28.5 Q11.5 27.5 9.5 26 L4.5 27.8 L2 23.4 L6 20 Q5.5 18 6 16 L2 12.6 L4.5 8.2 L9.5 10 Q11.5 8.5 14 7.5 Z" fill="none" stroke="#1A1A1A" stroke-width="2.4" stroke-linejoin="round"/><circle cx="17.5" cy="18" r="4.8" fill="none" stroke="#1A1A1A" stroke-width="2.4"/></g></svg>
<svg class="i" style="left:541px;top:160px;" width="32" height="32" viewBox="0 0 32 32"><circle cx="16" cy="16" r="14.3" fill="none" stroke="#1A1A1A" stroke-width="2.2"/><path d="M11.5 12 Q11.5 7.5 16 7.5 Q20.5 7.5 20.5 11.5 Q20.5 14 17.5 15.5 Q16 16.5 16 19" fill="none" stroke="#1A1A1A" stroke-width="2.2"/><circle cx="16" cy="23.5" r="1.5" fill="#1A1A1A"/></svg>
</body></html>
